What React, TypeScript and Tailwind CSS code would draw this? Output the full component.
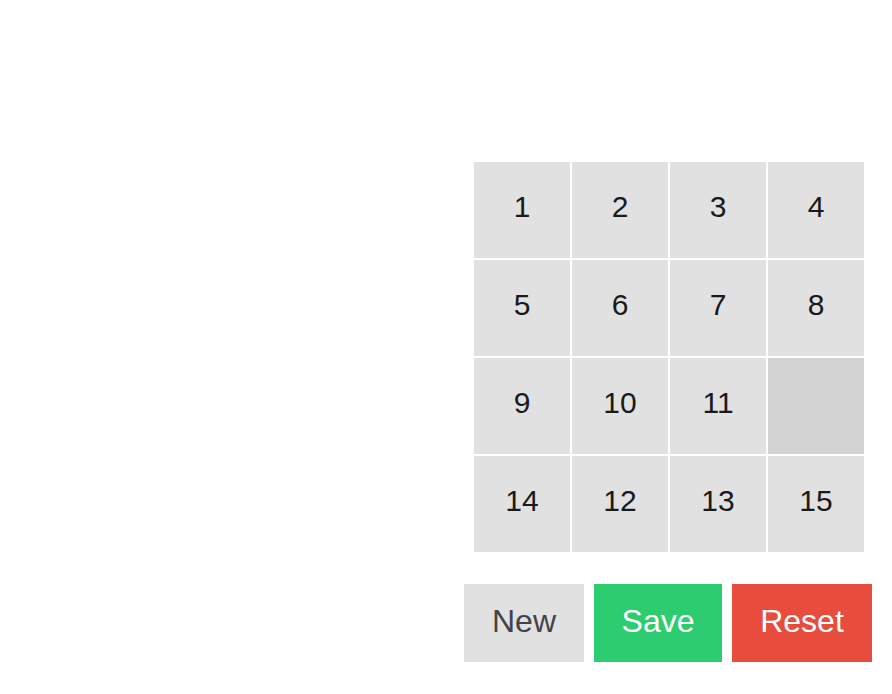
import React from 'react';

const tiles: (number | null)[] = [1, 2, 3, 4, 5, 6, 7, 8, 9, 10, 11, null, 14, 12, 13, 15];

const App = () => {
  return (
    <div className="flex w-full min-h-[694px] bg-white" style={{ fontFamily: '"Liberation Sans", Arial, sans-serif' }}>
      <div className="flex-1"></div>
      <div className="flex-1 flex flex-col items-center pt-[162px]">
        <div className="grid grid-cols-4 gap-[2px] w-[390px]">
          {tiles.map((n, i) => (
            <div
              key={i}
              className={
                n === null
                  ? 'h-[96px] bg-[#d2d2d2]'
                  : 'h-[96px] bg-[#e1e1e1] flex items-center justify-center text-[30px] text-[#1a1a1a] pb-[8px]'
              }
            >
              {n}
            </div>
          ))}
        </div>

        <div className="flex gap-[10px] mt-[32px] mr-[2px]">
          <button className="w-[120px] h-[78px] bg-[#e1e1e1] text-[#444] text-[32px] pb-[4px]">New</button>
          <button className="w-[128px] h-[78px] bg-[#2ecc71] text-white text-[32px] pb-[4px]">Save</button>
          <button className="w-[140px] h-[78px] bg-[#e74c3c] text-white text-[32px] pb-[4px]">Reset</button>
        </div>
      </div>
    </div>
  );
};

export default App;
